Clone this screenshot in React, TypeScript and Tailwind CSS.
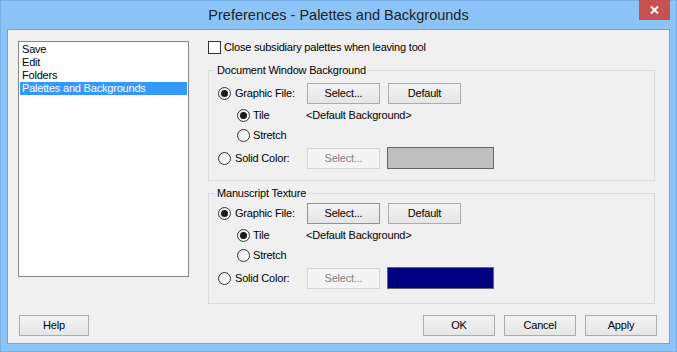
import React from "react";

function Radio({ checked }: { checked?: boolean }) {
  return (
    <span className="w-[13px] h-[13px] shrink-0 rounded-full border border-[#333333] bg-linear-to-br from-[#e6e6e6] to-white flex items-center justify-center">
      {checked && <span className="w-[7px] h-[7px] rounded-full bg-[#1a1a1a]" />}
    </span>
  );
}

function Btn({
  children,
  disabled,
  focused,
  className = "",
}: {
  children: React.ReactNode;
  disabled?: boolean;
  focused?: boolean;
  className?: string;
}) {
  const look = disabled
    ? "border-[#d5d5d5] bg-[#f4f4f4] text-[#838383]"
    : focused
    ? "border-[#5a9de0] bg-linear-to-b from-[#f2f2f2] to-[#e6e6e6] text-black"
    : "border-[#acacac] bg-linear-to-b from-[#f2f2f2] to-[#e6e6e6] text-black";
  return (
    <div
      className={`h-[21px] shrink-0 border flex items-center justify-center text-[11px] ${look} ${className}`}
    >
      {children}
    </div>
  );
}

function BackgroundGroup({
  title,
  swatch,
  focused,
  topGap,
  bottomPad,
}: {
  title: string;
  swatch: string;
  focused?: boolean;
  topGap: string;
  bottomPad: string;
}) {
  return (
    <fieldset className="w-[447px] border border-[#dcdcdc]">
      <legend className="ml-[6px] px-[2px] text-[11px] leading-[13px]">{title}</legend>
      <div className={`pl-[9px] flex flex-col ${topGap} ${bottomPad}`}>
        <div className="h-[21px] flex items-center">
          <div className="w-[89px] flex items-center gap-[4px]">
            <Radio checked />
            <span>Graphic File:</span>
          </div>
          <Btn focused={focused} className="w-[73px]">
            Select...
          </Btn>
          <Btn className="w-[73px] ml-[8px]">Default</Btn>
        </div>
        <div className="h-[20px] mt-[1px] flex items-center">
          <div className="w-[88px] pl-[19px] flex items-center gap-[3px]">
            <Radio checked />
            <span>Tile</span>
          </div>
          <span>&lt;Default Background&gt;</span>
        </div>
        <div className="h-[20px] flex items-center">
          <div className="pl-[19px] flex items-center gap-[3px]">
            <Radio />
            <span>Stretch</span>
          </div>
        </div>
        <div className="h-[22px] mt-[2px] flex items-center">
          <div className="w-[89px] flex items-center gap-[4px]">
            <Radio />
            <span>Solid Color:</span>
          </div>
          <Btn disabled className="w-[73px]">
            Select...
          </Btn>
          <div className={`w-[107px] h-[22px] ml-[7px] border border-[#646464] ${swatch}`} />
        </div>
      </div>
    </fieldset>
  );
}

export default function App() {
  const items = ["Save", "Edit", "Folders", "Palettes and Backgrounds"];
  return (
    <div className="w-[677px] h-[352px] bg-[#8cc4f7] border border-[#79b1e6] flex flex-col font-['Liberation_Sans',Arial,sans-serif] text-[11px] tracking-[-0.2px] text-black">
      <div className="relative h-[28px] shrink-0 flex items-center justify-center">
        <span className="text-[14.5px] tracking-normal text-[#1e1e1e] mt-[2px]">
          Preferences - Palettes and Backgrounds
        </span>
        <div className="absolute right-[6px] top-[-1px] w-[31px] h-[20px] bg-[#c75050] flex items-center justify-center text-white">
          <svg width="9" height="8" viewBox="0 0 9 8">
            <path d="M1 0.5 L8 7.5 M8 0.5 L1 7.5" stroke="white" strokeWidth="2" />
          </svg>
        </div>
      </div>

      <div className="mx-[6px] h-[315px] border border-[#6da3d8] bg-[#f0f0f0] flex flex-col">
        <div className="flex pt-[11px] pl-[10px]">
          <div className="w-[171px] h-[236px] border border-[#828790] bg-white p-[1px]">
            {items.map((it, i) => (
              <div
                key={it}
                className={`h-[13px] leading-[13px] pl-[2px] ${
                  i === 3 ? "bg-[#3399ff] text-white" : ""
                }`}
              >
                {it}
              </div>
            ))}
          </div>

          <div className="ml-[19px] flex flex-col">
            <div className="h-[13px] flex items-center gap-[3px]">
              <span className="w-[13px] h-[13px] border border-[#333333] bg-white" />
              <span>Close subsidiary palettes when leaving tool</span>
            </div>
            <div className="mt-[10px]">
              <BackgroundGroup
                title="Document Window Background"
                swatch="bg-[#c0c0c0]"
                topGap="pt-[6px]"
                bottomPad="pb-[11px]"
              />
            </div>
            <div className="mt-[6px]">
              <BackgroundGroup
                title="Manuscript Texture"
                swatch="bg-[#000080]"
                focused
                topGap="pt-[3px]"
                bottomPad="pb-[14px]"
              />
            </div>
          </div>
        </div>

        <div className="mt-auto pb-[7px] pl-[11px] pr-[12px] flex items-center">
          <Btn className="w-[70px]">Help</Btn>
          <div className="ml-auto flex gap-[9px]">
            <Btn className="w-[72px]">OK</Btn>
            <Btn className="w-[72px]">Cancel</Btn>
            <Btn className="w-[72px]">Apply</Btn>
          </div>
        </div>
      </div>
    </div>
  );
}
